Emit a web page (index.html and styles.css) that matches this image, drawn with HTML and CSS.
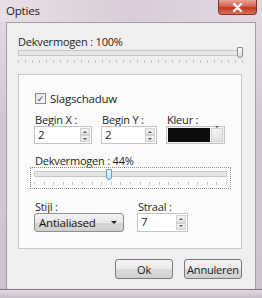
FILE: index.html
```html
<!DOCTYPE html>
<html lang="nl">
<head>
    <meta charset="UTF-8">
    <title>Opties</title>
    <link rel="stylesheet" href="styles.css">
</head>
<body>
    <div class="window">
        <div class="titlebar">
            <span class="title">Opties</span>
            <button class="close">
                <svg width="11" height="9" viewBox="0 0 11 9"><path d="M2 1 L9 8 M9 1 L2 8" stroke="#fff" stroke-width="2.4" stroke-linecap="round"/></svg>
            </button>
        </div>
        <div class="client">
            <div class="label">Dekvermogen : 100%</div>
            <div class="slider slider-top">
                <div class="track"></div>
                <div class="thumb thumb-end"></div>
                <div class="ticks"></div>
            </div>

            <div class="group">
                <label class="check"><span class="box">&#10003;</span>Slagschaduw</label>

                <div class="row">
                    <div class="field">
                        <div class="label">Begin X :</div>
                        <div class="spin w58"><span class="val">2</span><span class="arrows"><i class="up"></i><i class="down"></i></span></div>
                    </div>
                    <div class="field">
                        <div class="label">Begin Y :</div>
                        <div class="spin w56"><span class="val">2</span><span class="arrows"><i class="up"></i><i class="down"></i></span></div>
                    </div>
                    <div class="field">
                        <div class="label">Kleur :</div>
                        <div class="color"><span class="swatch"></span><span class="drop"><i class="down"></i></span></div>
                    </div>
                </div>

                <div class="label label-indent">Dekvermogen : 44%</div>
                <div class="slider slider-focus">
                    <div class="track"></div>
                    <div class="thumb thumb-mid"></div>
                    <div class="ticks ticks-wide"></div>
                </div>

                <div class="row row-bottom">
                    <div class="field">
                        <div class="label">Stijl :</div>
                        <div class="combo">Antialiased<span class="caret"></span></div>
                    </div>
                    <div class="field">
                        <div class="label">Straal :</div>
                        <div class="spin w51 tall"><span class="val">7</span><span class="arrows"><i class="up"></i><i class="down"></i></span></div>
                    </div>
                </div>
            </div>

            <div class="buttons">
                <button class="btn">Ok</button>
                <button class="btn">Annuleren</button>
            </div>
        </div>
        <div class="bottom"></div>
    </div>
</body>
</html>
```

FILE: styles.css
```css
body {
    margin: 0;
    font-family: "Open Sans", "DejaVu Sans", sans-serif;
    font-size: 11px;
    letter-spacing: -0.2px;
    color: #1e1e1e;
    background: #d8cdd8;
}
.window {
    width: 262px;
    height: 298px;
    display: flex;
    flex-direction: column;
    background: linear-gradient(to bottom, #e6dbe4 0%, #d3c6d4 40%, #cfc3d2 100%);
    overflow: hidden;
}
.titlebar {
    height: 22px;
    display: flex;
    align-items: flex-start;
    justify-content: space-between;
    padding: 0 5px 0 6px;
    background: linear-gradient(to right, #e9e0e6, #d9ccd8 50%, #e2d8e2);
}
.title {
    font-size: 11.5px;
    color: #1a1a1a;
    margin-top: 3px;
}
.close {
    width: 39px;
    height: 15px;
    border: 1px solid #8a3028;
    border-top: none;
    border-radius: 0 0 4px 4px;
    background: linear-gradient(to bottom, #e8a395 0%, #d4634d 45%, #c2361f 55%, #d9745a 100%);
    display: flex;
    align-items: center;
    justify-content: center;
    padding: 0;
}
.client {
    flex: 1;
    margin: 0 6px;
    background: #f0eff0;
    border: 1px solid #a59aa6;
    border-bottom: none;
    padding: 12px 12px 0 11px;
    display: flex;
    flex-direction: column;
}
.label {
    height: 13px;
    line-height: 13px;
    white-space: nowrap;
}
.slider {
    position: relative;
}
.slider-top {
    height: 16px;
    margin-top: 1px;
}
.track {
    height: 4px;
    background: #e7e7e7;
    border: 1px solid #c6c6c6;
    border-radius: 1px;
}
.slider-top .track {
    margin-top: 1px;
}
.thumb {
    position: absolute;
    width: 4px;
    height: 9px;
    background: linear-gradient(to bottom, #fafafa, #dcdcdc);
    border: 1px solid #8e8e8e;
    border-radius: 1px 1px 3px 3px;
}
.thumb-end {
    right: 0;
    top: -2px;
}
.thumb-mid {
    left: 75px;
    top: 1px;
    border-color: #5a9ed6;
    background: linear-gradient(to bottom, #eaf6fd, #c4e5f6);
}
.ticks {
    height: 3px;
    margin-top: 4px;
    background: repeating-linear-gradient(to right, #c4c4c4 0, #c4c4c4 1px, transparent 1px, transparent 7px);
}
.group {
    margin-top: 9px;
    width: 224px;
    height: 175px;
    box-sizing: border-box;
    background: #fbfbfb;
    border: 1px solid #c9c6c9;
    padding: 17px 10px 0 15px;
}
.check {
    display: flex;
    align-items: center;
    gap: 4px;
    height: 13px;
    padding-left: 1px;
    font-size: 11.5px;
}
.box {
    width: 9px;
    height: 9px;
    border: 1px solid #8a8a8a;
    background: linear-gradient(to bottom right, #e4e4e4, #f8f8f8);
    font-size: 9px;
    line-height: 9px;
    text-align: center;
    color: #3a3a8a;
    font-weight: bold;
}
.row {
    display: flex;
    margin-top: 8px;
}
.field {
    display: flex;
    flex-direction: column;
    margin-right: 9px;
}
.field .label {
    padding-left: 1px;
}
.spin {
    height: 18px;
    box-sizing: border-box;
    border: 1px solid #c2c4ca;
    background: #fff;
    display: flex;
    justify-content: space-between;
    font-size: 11.5px;
}
.w58 { width: 58px; }
.w56 { width: 56px; }
.w51 { width: 51px; }
.val {
    padding-left: 3px;
    line-height: 16px;
}
.arrows {
    width: 10px;
    display: flex;
    flex-direction: column;
    margin: 1px 1px 1px 0;
}
.arrows i, .drop {
    flex: 1;
    display: flex;
    align-items: center;
    justify-content: center;
    background: linear-gradient(to bottom, #f4f4f4, #e2e2e2);
    border: 1px solid #d2d2d2;
}
.up::after, .down::after {
    content: "";
    border-left: 2px solid transparent;
    border-right: 2px solid transparent;
}
.up::after { border-bottom: 2px solid #5a5a5a; }
.down::after { border-top: 2px solid #5a5a5a; }
.color {
    width: 59px;
    height: 18px;
    box-sizing: border-box;
    border: 1px solid #c2c4ca;
    background: #f4f4f4;
    display: flex;
    padding: 1px;
    gap: 1px;
}
.swatch {
    width: 43px;
    background: #0c0c0c;
}
.drop {
    width: 10px;
    flex: none;
}
.label-indent {
    margin-top: 10px;
    padding-left: 1px;
}
.slider-focus {
    margin-left: -4px;
    width: 201px;
    height: 22px;
    box-sizing: border-box;
    border: 1px dotted #8c8c8c;
    padding: 3px 3px 0 3px;
}
.ticks-wide {
    margin-top: 5px;
    background: repeating-linear-gradient(to right, #c4c4c4 0, #c4c4c4 1px, transparent 1px, transparent 9.6px);
}
.row-bottom {
    margin-top: 11px;
}
.row-bottom .field:first-child {
    margin-right: 13px;
}
.combo {
    width: 90px;
    height: 19px;
    box-sizing: border-box;
    border: 1px solid #8f8f8f;
    border-radius: 3px;
    background: linear-gradient(to bottom, #f3f3f3 0%, #e8e8e8 50%, #d6d6d6 51%, #cfcfcf 100%);
    display: flex;
    align-items: center;
    justify-content: space-between;
    padding: 0 6px 0 4px;
    font-size: 11.5px;
    color: #111;
}
.caret {
    border-left: 3px solid transparent;
    border-right: 3px solid transparent;
    border-top: 3px solid #222;
}
.tall {
    height: 19px;
}
.buttons {
    display: flex;
    justify-content: flex-end;
    gap: 11px;
    margin-top: 10px;
    width: 224px;
}
.btn {
    width: 58px;
    height: 20px;
    padding: 0;
    font-family: inherit;
    font-size: 11px;
    letter-spacing: -0.2px;
    color: #1a1a1a;
    border: 1px solid #7a7a7a;
    border-radius: 3px;
    background: linear-gradient(to bottom, #f4f4f4 0%, #ebebeb 50%, #dddddd 51%, #cfcfcf 100%);
}
.bottom {
    height: 8px;
    border-top: 1px solid #7e747f;
    background: linear-gradient(to bottom, #e3dae3, #c9bfcb);
}
```
